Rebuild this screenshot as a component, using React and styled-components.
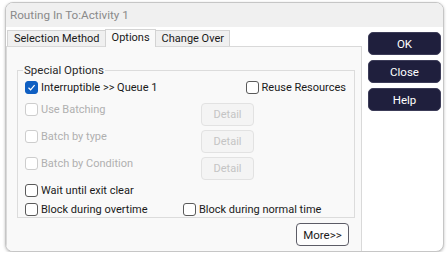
import React from 'react';
import styled, { createGlobalStyle } from 'styled-components';

const GlobalStyle = createGlobalStyle`
  html, body {
    margin: 0;
    padding: 0;
    background: #ffffff;
  }
  body {
    font-family: Roboto, "Liberation Sans", Arial, sans-serif;
    font-size: 11px;
    color: #1a1a1a;
  }
`;

const Dialog = styled.div`
  margin: 2px 0 0 5px;
  width: 439px;
  height: 250px;
  box-sizing: border-box;
  border: 1px solid #c6c6c6;
  border-radius: 8px;
  box-shadow: 0 1px 3px rgba(0, 0, 0, 0.25);
  background: #ffffff;
  overflow: hidden;
  display: flex;
  flex-direction: column;
`;

const TitleBar = styled.div`
  height: 24px;
  flex: none;
  background: #f0f0f0;
  color: #8a8a8a;
  font-size: 11.7px;
  line-height: 24px;
  padding-left: 4px;
`;

const Body = styled.div`
  flex: 1;
  display: flex;
  min-height: 0;
`;

const LeftCol = styled.div`
  width: 356px;
  display: flex;
  flex-direction: column;
`;

const TabStrip = styled.div`
  height: 19px;
  display: flex;
  align-items: flex-end;
  padding-left: 1px;
`;

const Tab = styled.div`
  height: ${p => (p.$active ? 18 : 16)}px;
  box-sizing: border-box;
  padding: 0 5px 0 6px;
  margin-right: -1px;
  border: 1px solid #d3d3d3;
  border-bottom: none;
  background: ${p => (p.$active ? '#f9f9f9' : '#f0f0f0')};
  font-size: 11px;
  line-height: 15px;
  position: relative;
  z-index: ${p => (p.$active ? 1 : 0)};
  margin-bottom: ${p => (p.$active ? -1 : 0)}px;
`;

const Panel = styled.div`
  flex: 1;
  background: #f9f9f9;
  border: 1px solid #d9d9d9;
  border-bottom: none;
  padding: 16px 6px 0 10px;
  display: flex;
  flex-direction: column;
`;

const Group = styled.fieldset`
  margin: 0;
  border: 1px solid #dcdcdc;
  padding: 4px 0 1px 7px;
  min-width: 0;
`;

const Legend = styled.legend`
  padding: 0 1px;
  margin-left: -2px;
  color: #2a2a2a;
  font-size: 11.5px;
`;

const Row = styled.div`
  display: flex;
  align-items: ${p => p.$align || 'center'};
  justify-content: ${p => p.$justify || 'flex-start'};
  margin-top: ${p => p.$gap || 0}px;
  padding-right: ${p => p.$padRight || 0}px;
`;

const Cell = styled.div`
  width: ${p => p.$w}px;
  flex: none;
`;

const CheckLabel = styled.label`
  display: flex;
  align-items: center;
  gap: 3px;
  height: 13px;
  color: ${p => (p.$disabled ? '#b0b0b0' : '#1a1a1a')};
  white-space: nowrap;
`;

const Box = styled.span`
  width: 13px;
  height: 13px;
  box-sizing: border-box;
  border-radius: 3px;
  border: 1px solid ${p => (p.$checked ? '#0f5fc2' : p.$disabled ? '#cdcdcd' : '#5a5a5a')};
  background: ${p => (p.$checked ? '#0f5fc2' : '#ffffff')};
  display: flex;
  align-items: center;
  justify-content: center;
  flex: none;
`;

const DetailButton = styled.button`
  width: 53px;
  height: 23px;
  border: 1px solid #e2e2e2;
  border-radius: 4px;
  background: #f4f4f4;
  color: #c4c4c4;
  font-family: inherit;
  font-size: 11px;
  padding: 0;
`;

const MoreRow = styled.div`
  display: flex;
  justify-content: flex-end;
  margin-top: 5px;
  padding-right: 6px;
`;

const MoreButton = styled.button`
  width: 53px;
  height: 23px;
  border: 1px solid #5c5c66;
  border-radius: 4px;
  background: #fdfdfd;
  color: #1a1a1a;
  font-family: inherit;
  font-size: 11.5px;
  padding: 0;
`;

const RightCol = styled.div`
  flex: 1;
  padding: 5px 2px 0 6px;
  display: flex;
  flex-direction: column;
  gap: 5px;
`;

const ActionButton = styled.button`
  width: 73px;
  height: 23px;
  border: 1px solid #3c3c58;
  border-radius: 5px;
  background: #1f1f3d;
  color: #ffffff;
  font-family: inherit;
  font-size: 11.5px;
  padding: 0;
`;

const Check = ({ label, checked, disabled }) => (
  <CheckLabel $disabled={disabled}>
    <Box $checked={checked} $disabled={disabled}>
      {checked && (
        <svg width="9" height="9" viewBox="0 0 9 9">
          <path d="M1.5 4.8 L3.6 6.8 L7.6 2.2" fill="none" stroke="#fff" strokeWidth="1.2" />
        </svg>
      )}
    </Box>
    {label}
  </CheckLabel>
);

export default function App() {
  return (
    <>
      <GlobalStyle />
      <Dialog>
        <TitleBar>Routing In To:Activity 1</TitleBar>
        <Body>
          <LeftCol>
            <TabStrip>
              <Tab>Selection Method</Tab>
              <Tab $active>Options</Tab>
              <Tab>Change Over</Tab>
            </TabStrip>
            <Panel>
              <Group>
                <Legend>Special Options</Legend>
                <Row $justify="space-between" $padRight={8}>
                  <Check label="Interruptible >> Queue 1" checked />
                  <Check label="Reuse Resources" />
                </Row>
                <Row $align="flex-start" $gap={9}>
                  <Cell $w={176}><Check label="Use Batching" disabled /></Cell>
                  <DetailButton disabled>Detail</DetailButton>
                </Row>
                <Row $align="flex-start" $gap={4}>
                  <Cell $w={176}><Check label="Batch by type" disabled /></Cell>
                  <DetailButton disabled>Detail</DetailButton>
                </Row>
                <Row $align="flex-start" $gap={4}>
                  <Cell $w={176}><Check label="Batch by Condition" disabled /></Cell>
                  <DetailButton disabled>Detail</DetailButton>
                </Row>
                <Row $gap={4}>
                  <Check label="Wait until exit clear" />
                </Row>
                <Row $gap={6}>
                  <Cell $w={158}><Check label="Block during overtime" /></Cell>
                  <Check label="Block during normal time" />
                </Row>
              </Group>
              <MoreRow>
                <MoreButton>More&gt;&gt;</MoreButton>
              </MoreRow>
            </Panel>
          </LeftCol>
          <RightCol>
            <ActionButton>OK</ActionButton>
            <ActionButton>Close</ActionButton>
            <ActionButton>Help</ActionButton>
          </RightCol>
        </Body>
      </Dialog>
    </>
  );
}
